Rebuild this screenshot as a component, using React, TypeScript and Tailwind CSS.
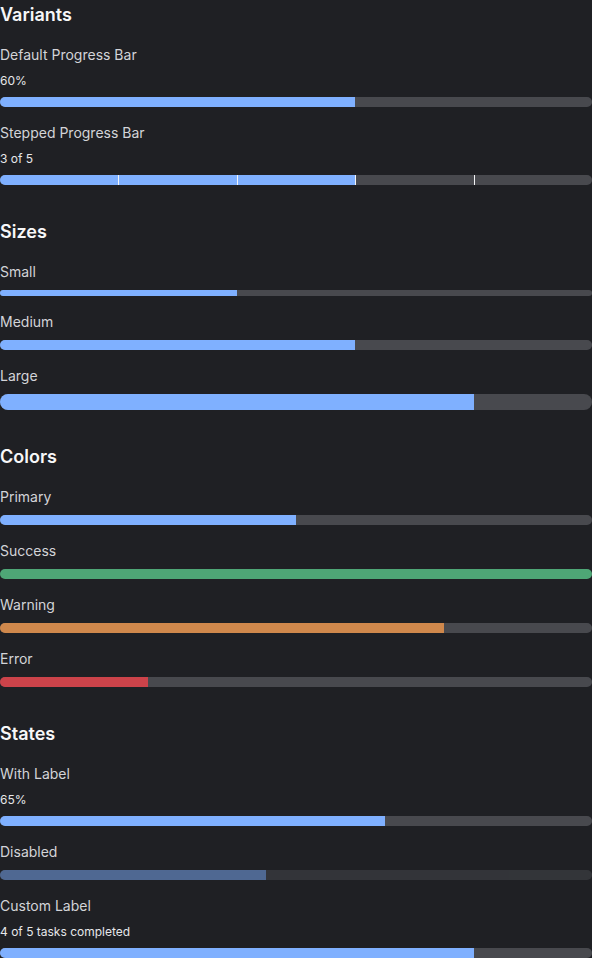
import React from 'react';

type Tone = 'primary' | 'success' | 'warning' | 'error';

const fills: { [key in Tone]: string } = {
  primary: 'bg-[#7fb0ff]',
  success: 'bg-[#4ea676]',
  warning: 'bg-[#cf884c]',
  error: 'bg-[#cc434a]',
};

const heights = {
  sm: 'h-[6px]',
  md: 'h-[10px]',
  lg: 'h-4',
};

interface BarProps {
  value: number;
  size?: 'sm' | 'md' | 'lg';
  tone?: Tone;
  disabled?: boolean;
  steps?: number;
}

const Bar: React.FC<BarProps> = ({ value, size = 'md', tone = 'primary', disabled, steps }) => {
  return (
    <div
      className={`relative w-full overflow-hidden rounded-full bg-[#48494e] ${heights[size]} ${
        disabled ? 'opacity-50' : ''
      }`}
    >
      <div className={`h-full ${fills[tone]}`} style={{ width: `${value}%` }} />
      {steps &&
        Array.from({ length: steps - 1 }).map((_, i) => (
          <span
            key={i}
            className="absolute top-0 h-full w-px bg-[#f2f3f5]"
            style={{ left: `${((i + 1) * 100) / steps}%` }}
          />
        ))}
    </div>
  );
};

interface ItemProps {
  label: string;
  note?: string;
  children: React.ReactNode;
}

const Item: React.FC<ItemProps> = ({ label, note, children }) => (
  <div className="flex flex-col gap-2">
    <span className="text-sm leading-5 text-[#d3d4d8]">{label}</span>
    {note && <span className="text-xs leading-4 text-[#e6e7ea]">{note}</span>}
    {children}
  </div>
);

const Section: React.FC<{ title: string; children: React.ReactNode }> = ({ title, children }) => (
  <section>
    <h2 className="mb-4 text-lg leading-7 font-semibold text-[#f7f7f8]">{title}</h2>
    <div className="flex flex-col gap-4">{children}</div>
  </section>
);

export default function App() {
  return (
    <div className="min-h-screen bg-[#1f2024] pt-px font-['Inter',sans-serif]">
      <div className="flex flex-col gap-[33px]">
        <Section title="Variants">
          <Item label="Default Progress Bar" note="60%">
            <Bar value={60} />
          </Item>
          <Item label="Stepped Progress Bar" note="3 of 5">
            <Bar value={60} steps={5} />
          </Item>
        </Section>

        <Section title="Sizes">
          <Item label="Small">
            <Bar value={40} size="sm" />
          </Item>
          <Item label="Medium">
            <Bar value={60} />
          </Item>
          <Item label="Large">
            <Bar value={80} size="lg" />
          </Item>
        </Section>

        <Section title="Colors">
          <Item label="Primary">
            <Bar value={50} />
          </Item>
          <Item label="Success">
            <Bar value={100} tone="success" />
          </Item>
          <Item label="Warning">
            <Bar value={75} tone="warning" />
          </Item>
          <Item label="Error">
            <Bar value={25} tone="error" />
          </Item>
        </Section>

        <Section title="States">
          <Item label="With Label" note="65%">
            <Bar value={65} />
          </Item>
          <Item label="Disabled">
            <Bar value={45} disabled />
          </Item>
          <Item label="Custom Label" note="4 of 5 tasks completed">
            <Bar value={80} />
          </Item>
        </Section>
      </div>
    </div>
  );
}
